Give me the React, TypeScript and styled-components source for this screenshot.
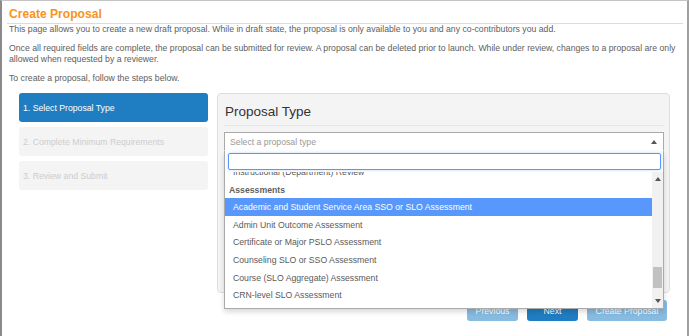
import React, { useLayoutEffect, useRef } from 'react'
import styled, { createGlobalStyle } from 'styled-components'

const GlobalStyle = createGlobalStyle`
    html, body {
        margin: 0;
        padding: 0;
        background: #ffffff;
    }
    body {
        font-family: "Liberation Sans", Arial, sans-serif;
        font-size: 8.7px;
        color: #5b5b5b;
    }
`

const steps = [
    { label: '1. Select Proposal Type', active: true },
    { label: '2. Complete Minimum Requirements', active: false },
    { label: '3. Review and Submit', active: false },
]

type Option = { label: string, group?: boolean, selected?: boolean }

const options: Option[] = [
    { label: 'Program Review', group: true },
    { label: 'Administrative Unit Review' },
    { label: 'Instructional (Department) Review' },
    { label: 'Assessments', group: true },
    { label: 'Academic and Student Service Area SSO or SLO Assessment', selected: true },
    { label: 'Admin Unit Outcome Assessment' },
    { label: 'Certificate or Major PSLO Assessment' },
    { label: 'Counseling SLO or SSO Assessment' },
    { label: 'Course (SLO Aggregate) Assessment' },
    { label: 'CRN-level SLO Assessment' },
    { label: 'Institutional SLO Assessment' },
    { label: 'Program SLO Assessment' },
]

const ITEM_H = 17.6

const Arrow: React.FC<{ up?: boolean }> = ({ up }) => (
    <svg width="6" height="4" viewBox="0 0 6 4">
        <path d={up ? 'M0 4 L3 0 L6 4 Z' : 'M0 0 L3 4 L6 0 Z'} fill="#555" />
    </svg>
)

const App: React.FC = () => {
    const listRef = useRef<HTMLDivElement>(null)

    useLayoutEffect(() => {
        if (listRef.current) {
            listRef.current.scrollTop = ITEM_H * 2 + 9
        }
    }, [])

    return (
        <Frame>
            <GlobalStyle />
            <Title>Create Proposal</Title>
            <Text>This page allows you to create a new draft proposal. While in draft state, the proposal is only available to you and any co-contributors you add.</Text>
            <Text>Once all required fields are complete, the proposal can be submitted for review. A proposal can be deleted prior to launch. While under review, changes to a proposal are only allowed when requested by a reviewer.</Text>
            <Text>To create a proposal, follow the steps below.</Text>

            <Wizard>
                <Steps>
                    {steps.map(s => (
                        <Step key={s.label} $active={s.active}>{s.label}</Step>
                    ))}
                </Steps>

                <Main>
                    <Panel>
                        <PanelTitle>Proposal Type</PanelTitle>
                        <SelectWrap>
                            <Select>
                                <Placeholder>Select a proposal type</Placeholder>
                                <Arrow up />
                            </Select>
                            <Drop>
                                <Search />
                                <DropBody>
                                    <Results ref={listRef}>
                                        {options.map(o => (
                                            <Result key={o.label} $group={o.group} $selected={o.selected}>
                                                {o.label}
                                            </Result>
                                        ))}
                                    </Results>
                                    <Scrollbar>
                                        <ScrollButton><Arrow up /></ScrollButton>
                                        <Track>
                                            <Thumb style={{ marginTop: 81 }} />
                                        </Track>
                                        <ScrollButton><Arrow /></ScrollButton>
                                    </Scrollbar>
                                </DropBody>
                            </Drop>
                        </SelectWrap>
                    </Panel>

                    <Buttons>
                        <Button $primary={false} $width={51}>Previous</Button>
                        <Button $primary $width={51}>Next</Button>
                        <Button $primary={false} $width={80}>Create Proposal</Button>
                    </Buttons>
                </Main>
            </Wizard>
        </Frame>
    )
}

export default App

const Frame = styled.div`
    box-sizing: border-box;
    width: 689px;
    height: 336px;
    border-top: 1px solid #c4c4c4;
    border-left: 2px solid #8a8a8a;
    border-right: 2px solid #a0a0a0;
    padding: 0 4px 0 5px;
    overflow: hidden;
`

const Title = styled.h1`
    margin: 0;
    padding: 6px 0 2px 2px;
    font-size: 12.1px;
    line-height: 14px;
    font-weight: bold;
    color: #f7931e;
    border-bottom: 1px solid #dcdcdc;
`

const Text = styled.p`
    margin: 0 0 8px 2px;
    line-height: 11px;
    color: #606060;
`

const Wizard = styled.div`
    display: flex;
    align-items: flex-start;
    gap: 9px;
    margin-top: 9px;
    padding-left: 12px;
`

const Steps = styled.div`
    display: flex;
    flex-direction: column;
    gap: 5px;
    width: 189px;
`

const Step = styled.div<{ $active: boolean }>`
    height: 29px;
    display: flex;
    align-items: center;
    padding-left: 4px;
    border-radius: 3px;
    background: ${p => p.$active ? '#1f7dc1' : '#f4f4f4'};
    color: ${p => p.$active ? '#ffffff' : '#cdcdcd'};
`

const Main = styled.div`
    display: flex;
    flex-direction: column;
    width: 453px;
`

const Panel = styled.div`
    box-sizing: border-box;
    height: 200px;
    padding: 9px 5px 0 6px;
    background: #f4f4f4;
    border: 1px solid #dedede;
    border-radius: 4px;
`

const PanelTitle = styled.h2`
    margin: 0 0 6px 0;
    padding: 1px 0 5px 1px;
    font-size: 13.5px;
    line-height: 16px;
    font-weight: normal;
    color: #333333;
    border-bottom: 1px solid #e6e6e6;
`

const SelectWrap = styled.div`
    position: relative;
`

const Select = styled.div`
    box-sizing: border-box;
    height: 19px;
    display: flex;
    align-items: center;
    justify-content: space-between;
    padding: 0 6px 0 5px;
    background: #ffffff;
    border: 1px solid #aaaaaa;
    border-bottom-color: #ffffff;
`

const Placeholder = styled.span`
    color: #999999;
`

const Drop = styled.div`
    position: absolute;
    top: 100%;
    left: 0;
    right: 0;
    z-index: 10;
    background: #ffffff;
    border: 1px solid #aaaaaa;
    border-top: 0;
    box-shadow: 0 3px 5px rgba(0, 0, 0, 0.15);
`

const Search = styled.div`
    box-sizing: border-box;
    height: 17px;
    margin: 2px 2px 2px 3px;
    border: 1px solid #5897fb;
    border-radius: 2px;
    box-shadow: 0 0 3px rgba(88, 151, 251, 0.4);
`

const DropBody = styled.div`
    display: flex;
    height: 136px;
`

const Results = styled.div`
    flex: 1;
    overflow-y: scroll;
    scrollbar-width: none;
    &::-webkit-scrollbar {
        display: none;
    }
`

const Result = styled.div<{ $group?: boolean, $selected?: boolean }>`
    height: ${ITEM_H}px;
    display: flex;
    align-items: center;
    padding-left: ${p => p.$group ? '4px' : '8px'};
    font-weight: ${p => p.$group ? 'bold' : 'normal'};
    color: ${p => p.$selected ? '#ffffff' : p.$group ? '#5f5f5f' : '#5a5a5a'};
    background: ${p => p.$selected ? '#5897fb' : 'transparent'};
    white-space: nowrap;
`

const Scrollbar = styled.div`
    width: 11px;
    display: flex;
    flex-direction: column;
    background: #f1f1f1;
`

const ScrollButton = styled.div`
    height: 14px;
    display: flex;
    align-items: center;
    justify-content: center;
`

const Track = styled.div`
    flex: 1;
`

const Thumb = styled.div`
    height: 21px;
    margin: 0 1px;
    background: #c1c1c1;
`

const Buttons = styled.div`
    display: flex;
    justify-content: flex-end;
    gap: 9px;
    margin-top: 7px;
    padding-right: 3px;
`

const Button = styled.button<{ $primary: boolean, $width: number }>`
    height: 21px;
    width: ${p => p.$width}px;
    padding: 0;
    border: 0;
    border-radius: 3px;
    font-family: "Liberation Sans", Arial, sans-serif;
    font-size: 8.7px;
    color: #ffffff;
    background: ${p => p.$primary ? '#1f7dc1' : '#87bbe0'};
`
